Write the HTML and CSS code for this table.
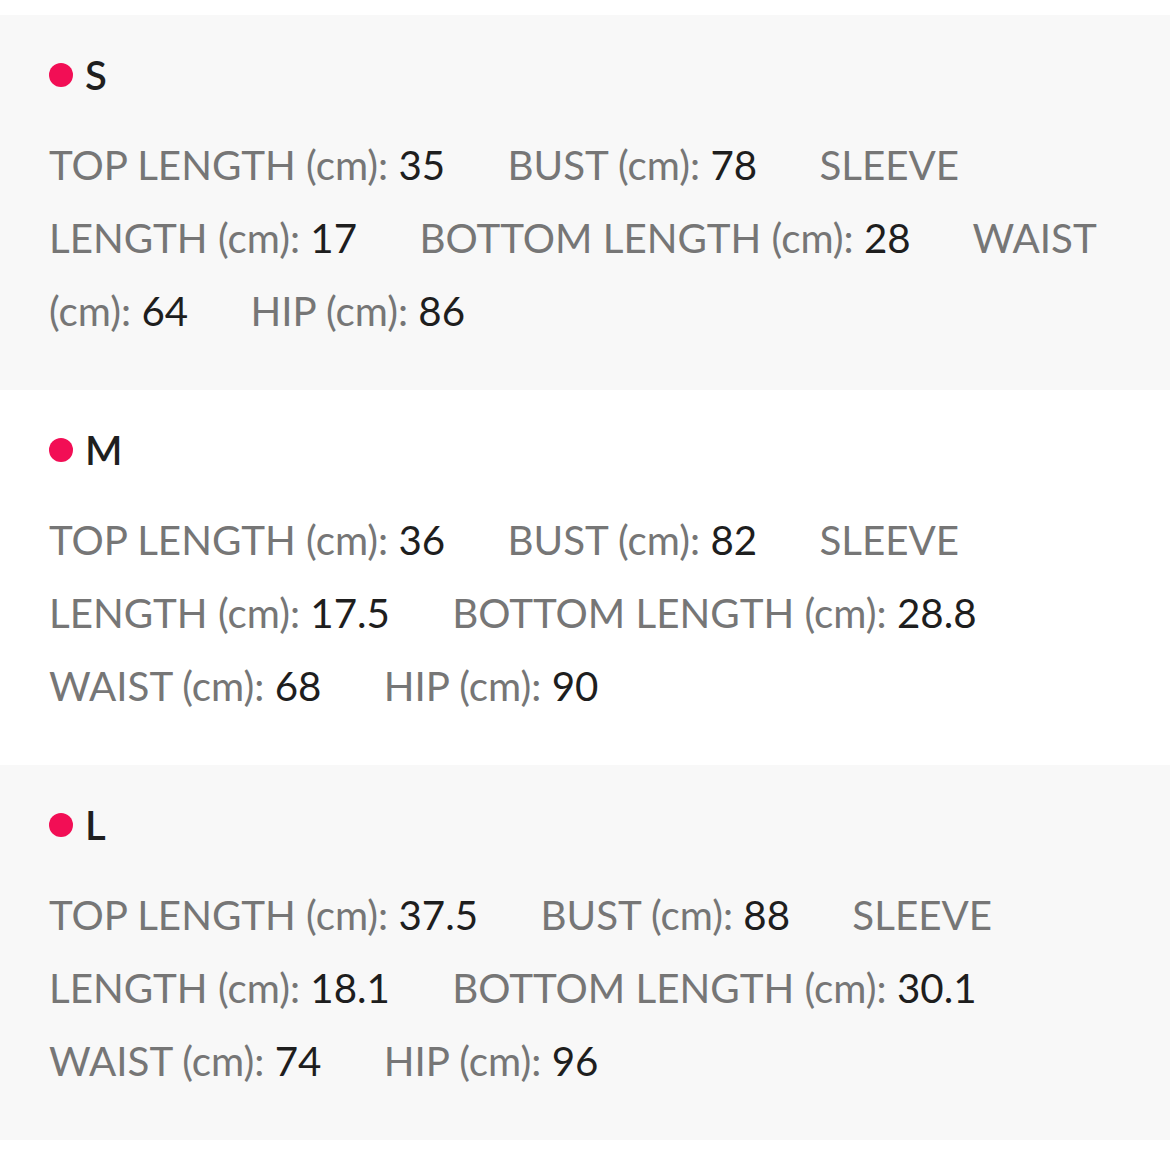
FILE: index.html
```html
<!DOCTYPE html>
<html>
<head>
<meta charset="utf-8">
<link rel="stylesheet" href="styles.css">
</head>
<body>
<div class="list">
  <section class="size grey">
    <div class="title"><span class="dot"></span>S</div>
    <p class="specs">TOP LENGTH (cm): <span class="val">35</span> BUST (cm): <span class="val">78</span> SLEEVE LENGTH (cm): <span class="val">17</span> BOTTOM LENGTH (cm): <span class="val">28</span> WAIST (cm): <span class="val">64</span> HIP (cm): <span class="val">86</span></p>
  </section>
  <section class="size">
    <div class="title"><span class="dot"></span>M</div>
    <p class="specs">TOP LENGTH (cm): <span class="val">36</span> BUST (cm): <span class="val">82</span> SLEEVE LENGTH (cm): <span class="val">17.5</span> BOTTOM LENGTH (cm): <span class="val">28.8</span> WAIST (cm): <span class="val">68</span> HIP (cm): <span class="val">90</span></p>
  </section>
  <section class="size grey">
    <div class="title"><span class="dot"></span>L</div>
    <p class="specs">TOP LENGTH (cm): <span class="val">37.5</span> BUST (cm): <span class="val">88</span> SLEEVE LENGTH (cm): <span class="val">18.1</span> BOTTOM LENGTH (cm): <span class="val">30.1</span> WAIST (cm): <span class="val">74</span> HIP (cm): <span class="val">96</span></p>
  </section>
</div>
</body>
</html>
```
FILE: styles.css
```css
html, body {
  margin: 0;
  padding: 0;
  background: #ffffff;
}
body {
  font-family: Lato, "Open Sans", sans-serif;
}
.list {
  padding-top: 15px;
}
.size {
  height: 375px;
  box-sizing: border-box;
  padding: 35px 49px 0 49px;
  background: #ffffff;
}
.size.grey {
  background: #f8f8f8;
}
.title {
  display: flex;
  align-items: center;
  height: 50px;
  font-size: 40px;
  font-weight: 600;
  color: #1f1f1f;
}
.dot {
  width: 24px;
  height: 24px;
  border-radius: 50%;
  background: #f20e55;
  margin-right: 12px;
}
.specs {
  margin: 28px 0 0 0;
  font-size: 40.3px;
  line-height: 73px;
  color: #767676;
}
.val {
  color: #1e1e1e;
  margin-right: 52px;
}
```
